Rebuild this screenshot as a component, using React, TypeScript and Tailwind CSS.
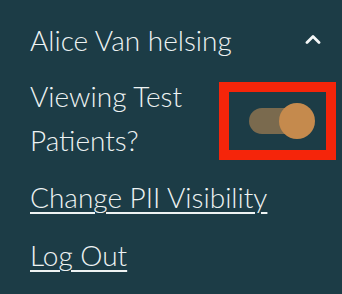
import React from "react";

export default function App() {
  return (
    <div
      className="w-[342px] h-[294px] bg-[#1c3c46] text-[#eef3f3] overflow-hidden"
      style={{ fontFamily: "Lato, 'Open Sans', sans-serif" }}
    >
      <div className="flex flex-col pl-[30px] pt-[18px] text-[28px] leading-[44px] font-light">
        <div className="flex items-center justify-between pr-[21px]">
          <span>Alice Van helsing</span>
          <svg width="16" height="10" viewBox="0 0 16 10" className="mt-[-2px]">
            <polyline
              points="2,8.5 8,2.5 14,8.5"
              fill="none"
              stroke="#f4f7f7"
              strokeWidth="2.8"
              strokeLinecap="round"
              strokeLinejoin="round"
            />
          </svg>
        </div>
        <div className="mt-[12px] flex items-start justify-between pr-[6px]">
          <span className="w-[170px]">Viewing Test Patients?</span>
          <div className="mt-[8px] w-[117px] h-[78px] border-[10px] border-[#f5250a] flex items-center pl-[20px]">
            <div className="relative w-[66px] h-[36px]">
              <div className="absolute left-0 top-[5px] w-[56px] h-[26px] rounded-full bg-[#7a6a4e]" />
              <div className="absolute right-0 top-0 w-[36px] h-[36px] rounded-full bg-[#c58a4d]" />
            </div>
          </div>
        </div>
        <div className="mt-[13px]">
          <a className="underline decoration-[2px] underline-offset-[4px]">Change PII Visibility</a>
        </div>
        <div className="mt-[14px]">
          <a className="underline decoration-[2px] underline-offset-[4px]">Log Out</a>
        </div>
      </div>
    </div>
  );
}
